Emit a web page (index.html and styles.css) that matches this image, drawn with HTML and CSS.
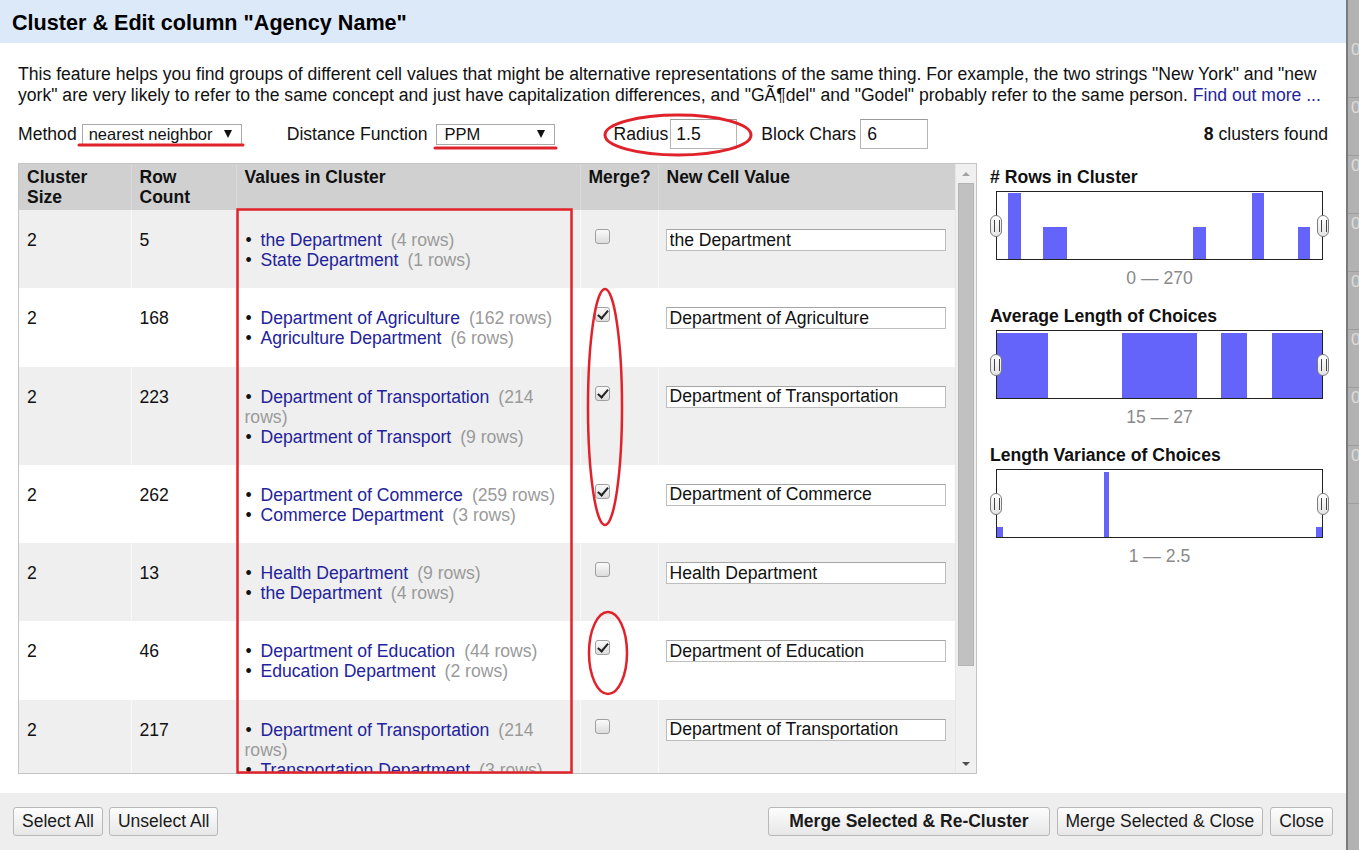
FILE: index.html
```html
<!DOCTYPE html>
<html lang="en">
<head>
<meta charset="utf-8">
<title>Cluster &amp; Edit column</title>
<link rel="stylesheet" href="styles.css">
</head>
<body>
<div class="page">
  <div class="dialog">
    <div class="dlg-header">
      <h1 class="dlg-title">Cluster &amp; Edit column "Agency Name"</h1>
    </div>
    <div class="dlg-body">
      <p class="intro">This feature helps you find groups of different cell values that might be alternative representations of the same thing. For example, the two strings "New York" and "new york" are very likely to refer to the same concept and just have capitalization differences, and "GÃ¶del" and "Godel" probably refer to the same person. <a class="link" href="#">Find out more ...</a></p>

      <div class="controls">
        <span class="ctl-label">Method</span>
        <span class="select select-method"><span>nearest neighbor</span><span class="caret"></span></span>
        <span class="ctl-label ctl-gap-distance">Distance Function</span>
        <span class="select select-distance"><span>PPM</span><span class="caret"></span></span>
        <span class="ctl-label ctl-gap-radius">Radius</span>
        <input class="num-input num-radius" type="text" value="1.5">
        <span class="ctl-label ctl-gap-block">Block Chars</span>
        <input class="num-input num-block" type="text" value="6">
        <span class="found"><b>8</b> clusters found</span>
      </div>

      <div class="main">
        <div class="grid-wrap">
          <div class="table-area">
            <table class="clusters">
              <colgroup>
                <col class="c-size"><col class="c-count"><col class="c-values"><col class="c-merge"><col class="c-new">
              </colgroup>
              <thead>
                <tr>
                  <th>Cluster Size</th>
                  <th>Row Count</th>
                  <th>Values in Cluster</th>
                  <th>Merge?</th>
                  <th>New Cell Value</th>
                </tr>
              </thead>
              <tbody>
                <tr class="odd">
                  <td>2</td><td>5</td>
                  <td><ul class="values">
                    <li><a class="link" href="#">the Department</a><span class="cnt">(4 rows)</span></li>
                    <li><a class="link" href="#">State Department</a><span class="cnt">(1 rows)</span></li>
                  </ul></td>
                  <td><input class="cb" type="checkbox"></td>
                  <td><input class="cell-input" type="text" value="the Department"></td>
                </tr>
                <tr>
                  <td>2</td><td>168</td>
                  <td><ul class="values">
                    <li><a class="link" href="#">Department of Agriculture</a><span class="cnt">(162 rows)</span></li>
                    <li><a class="link" href="#">Agriculture Department</a><span class="cnt">(6 rows)</span></li>
                  </ul></td>
                  <td><input class="cb" type="checkbox" checked></td>
                  <td><input class="cell-input" type="text" value="Department of Agriculture"></td>
                </tr>
                <tr class="odd">
                  <td>2</td><td>223</td>
                  <td><ul class="values">
                    <li><a class="link" href="#">Department of Transportation</a><span class="cnt">(214 rows)</span></li>
                    <li><a class="link" href="#">Department of Transport</a><span class="cnt">(9 rows)</span></li>
                  </ul></td>
                  <td><input class="cb" type="checkbox" checked></td>
                  <td><input class="cell-input" type="text" value="Department of Transportation"></td>
                </tr>
                <tr>
                  <td>2</td><td>262</td>
                  <td><ul class="values">
                    <li><a class="link" href="#">Department of Commerce</a><span class="cnt">(259 rows)</span></li>
                    <li><a class="link" href="#">Commerce Department</a><span class="cnt">(3 rows)</span></li>
                  </ul></td>
                  <td><input class="cb" type="checkbox" checked></td>
                  <td><input class="cell-input" type="text" value="Department of Commerce"></td>
                </tr>
                <tr class="odd">
                  <td>2</td><td>13</td>
                  <td><ul class="values">
                    <li><a class="link" href="#">Health Department</a><span class="cnt">(9 rows)</span></li>
                    <li><a class="link" href="#">the Department</a><span class="cnt">(4 rows)</span></li>
                  </ul></td>
                  <td><input class="cb" type="checkbox"></td>
                  <td><input class="cell-input" type="text" value="Health Department"></td>
                </tr>
                <tr>
                  <td>2</td><td>46</td>
                  <td><ul class="values">
                    <li><a class="link" href="#">Department of Education</a><span class="cnt">(44 rows)</span></li>
                    <li><a class="link" href="#">Education Department</a><span class="cnt">(2 rows)</span></li>
                  </ul></td>
                  <td><input class="cb" type="checkbox" checked></td>
                  <td><input class="cell-input" type="text" value="Department of Education"></td>
                </tr>
                <tr class="odd">
                  <td>2</td><td>217</td>
                  <td><ul class="values">
                    <li><a class="link" href="#">Department of Transportation</a><span class="cnt">(214 rows)</span></li>
                    <li><a class="link" href="#">Transportation Department</a><span class="cnt">(3 rows)</span></li>
                  </ul></td>
                  <td><input class="cb" type="checkbox"></td>
                  <td><input class="cell-input" type="text" value="Department of Transportation"></td>
                </tr>
              </tbody>
            </table>
          </div>
          <div class="vscroll">
            <div class="sb-arrow sb-up"></div>
            <div class="sb-track"><div class="sb-thumb"></div></div>
            <div class="sb-arrow sb-down"></div>
          </div>
        </div>

        <aside class="facets">
          <section class="facet">
            <h3 class="facet-title"># Rows in Cluster</h3>
            <div class="hist">
              <svg class="hist-svg" width="325" height="67" viewBox="0 0 325 67">
                <rect x="11" y="1" width="13" height="66"/>
                <rect x="46" y="35" width="24" height="32"/>
                <rect x="196" y="35" width="13" height="32"/>
                <rect x="255" y="1" width="12" height="66"/>
                <rect x="301" y="35" width="12" height="32"/>
              </svg>
              <span class="handle handle-l"></span>
              <span class="handle handle-r"></span>
            </div>
            <div class="range">0 — 270</div>
          </section>
          <section class="facet">
            <h3 class="facet-title">Average Length of Choices</h3>
            <div class="hist">
              <svg class="hist-svg" width="325" height="67" viewBox="0 0 325 67">
                <rect x="0" y="2" width="51" height="65"/>
                <rect x="125" y="2" width="75" height="65"/>
                <rect x="224" y="2" width="26" height="65"/>
                <rect x="275" y="2" width="50" height="65"/>
              </svg>
              <span class="handle handle-l"></span>
              <span class="handle handle-r"></span>
            </div>
            <div class="range">15 — 27</div>
          </section>
          <section class="facet">
            <h3 class="facet-title">Length Variance of Choices</h3>
            <div class="hist">
              <svg class="hist-svg" width="325" height="67" viewBox="0 0 325 67">
                <rect x="0" y="57" width="6" height="10"/>
                <rect x="107" y="2" width="5" height="65"/>
                <rect x="319" y="57" width="6" height="10"/>
              </svg>
              <span class="handle handle-l"></span>
              <span class="handle handle-r"></span>
            </div>
            <div class="range">1 — 2.5</div>
          </section>
        </aside>
      </div>
    </div>

    <div class="dlg-footer">
      <div class="btn-group">
        <button class="btn">Select All</button>
        <button class="btn">Unselect All</button>
      </div>
      <div class="btn-group">
        <button class="btn btn-primary">Merge Selected &amp; Re-Cluster</button>
        <button class="btn">Merge Selected &amp; Close</button>
        <button class="btn">Close</button>
      </div>
    </div>
  </div>

  <div class="bg-strip">
    <div class="bg-row">0</div>
    <div class="bg-row">0</div>
    <div class="bg-row">0</div>
    <div class="bg-row">0</div>
    <div class="bg-row">0</div>
    <div class="bg-row">0</div>
    <div class="bg-row">0</div>
    <div class="bg-row">0</div>
  </div>

  <svg class="annotations" width="1359" height="850" viewBox="0 0 1359 850">
    <g fill="none" stroke="#e0222b" stroke-width="3" stroke-linecap="round">
      <path d="M79 145 L243 145"/>
      <path d="M435 148 L556 148"/>
      <ellipse cx="678" cy="135" rx="73" ry="20"/>
      <rect x="237.5" y="209.5" width="334" height="563" stroke-width="2.5"/>
      <ellipse cx="605" cy="407" rx="17" ry="118" stroke-width="2.5"/>
      <ellipse cx="608" cy="653" rx="19" ry="41" stroke-width="2.5"/>
    </g>
  </svg>
</div>
</body>
</html>
```

FILE: styles.css
```css
* { box-sizing: border-box; }

html, body {
  margin: 0;
  padding: 0;
}

body {
  width: 1359px;
  height: 850px;
  overflow: hidden;
  font-family: "Liberation Sans", Arial, sans-serif;
  font-size: 17.6px;
  color: #111;
  background: #b4b4b4;
}

.page {
  position: relative;
  display: flex;
  width: 1359px;
  height: 850px;
}

/* ---------- dialog ---------- */
.dialog {
  width: 1348px;
  height: 850px;
  display: flex;
  flex-direction: column;
  background: #fff;
  border-right: 2px solid #7a7a7a;
}

.dlg-header {
  height: 43px;
  flex: none;
  background: #dce9f9;
  padding: 2px 0 0 12px;
}

.dlg-title {
  margin: 0;
  font-size: 21.6px;
  line-height: 41px;
  font-weight: bold;
  color: #000;
}

.dlg-body {
  flex: 1;
  padding: 0 18px;
}

.intro {
  margin: 21px 0 0;
  line-height: 21px;
  color: #111;
}

.link {
  color: #23239b;
  text-decoration: none;
}

/* ---------- controls ---------- */
.controls {
  display: flex;
  align-items: center;
  height: 30px;
  margin-top: 13px;
}

.ctl-label {
  margin-right: 5px;
}

.ctl-gap-distance { margin-left: 45px; margin-right: 8px; }
.ctl-gap-radius   { margin-left: 59px; margin-right: 2px; }
.ctl-gap-block    { margin-left: 24px; margin-right: 4px; }

.select {
  display: flex;
  align-items: center;
  justify-content: space-between;
  height: 21px;
  padding: 0 9px 0 6px;
  border: 1px solid #a9a9a9;
  background: #fff;
  font-size: 16.5px;
  line-height: 19px;
}

.select-method { width: 160px; }
.select-distance { width: 119px; padding-left: 8px; }

.caret {
  width: 0;
  height: 0;
  border-left: 4.5px solid transparent;
  border-right: 4.5px solid transparent;
  border-top: 8px solid #111;
}

.num-input {
  height: 30px;
  padding: 0 5px;
  border: 1px solid #b5b5b5;
  border-top-color: #9a9a9a;
  font-family: inherit;
  font-size: 17.6px;
  color: #111;
  background: #fff;
}

.num-radius { width: 67px; }
.num-block { width: 68px; padding-left: 6px; }

.found {
  margin-left: auto;
}

/* ---------- main area ---------- */
.main {
  display: flex;
  align-items: flex-start;
  margin-top: 14px;
}

.grid-wrap {
  display: flex;
  width: 959px;
  height: 611px;
  border: 1px solid #c4c4c4;
  flex: none;
}

.table-area {
  width: 936px;
  height: 609px;
  overflow: hidden;
}

.clusters {
  width: 936px;
  table-layout: fixed;
  border-collapse: collapse;
}

.c-size { width: 112px; }
.c-count { width: 105px; }
.c-values { width: 344px; }
.c-merge { width: 78px; }
.c-new { width: 297px; }

.clusters th {
  background: #d0d0d0;
  text-align: left;
  vertical-align: top;
  font-size: 17.5px;
  line-height: 20px;
  font-weight: bold;
  padding: 3px 8px 3px;
  height: 46px;
  color: #111;
  border-left: 1px solid #dadada;
}

.clusters th:first-child,
.clusters td:first-child { border-left: 0; }

.clusters td {
  vertical-align: top;
  line-height: 20px;
  padding: 20px 8px 18.3px;
  border-left: 1px solid rgba(255, 255, 255, 0.6);
}

.clusters tr.odd td { background: #efefef; }

.values {
  margin: 0;
  padding: 0;
  list-style: none;
}

.values li::before {
  content: "•";
  display: inline-block;
  box-sizing: border-box;
  width: 16px;
  padding-left: 1px;
  color: #111;
}

.cnt {
  margin-left: 9px;
  color: #9a9a9a;
}

.cb {
  appearance: none;
  -webkit-appearance: none;
  position: relative;
  width: 15px;
  height: 15px;
  margin: -1px 0 0 6px;
  border: 1px solid #a0a0a0;
  border-radius: 3px;
  background: linear-gradient(#fbfbfb, #dcdcdc);
  vertical-align: top;
}

.cb:checked::after {
  content: "";
  position: absolute;
  left: 4px;
  top: 0px;
  width: 4px;
  height: 9px;
  border-right: 2px solid #222;
  border-bottom: 2px solid #222;
  transform: rotate(40deg);
}

.cell-input {
  width: 280px;
  height: 22px;
  margin: -1px 0 0 -1px;
  padding: 0 3px;
  border: 1px solid #bdbdbd;
  border-top-color: #a5a5a5;
  font-family: inherit;
  font-size: 17.6px;
  color: #111;
  background: #fff;
  vertical-align: top;
}

/* ---------- scrollbar ---------- */
.vscroll {
  width: 21px;
  height: 609px;
  display: flex;
  flex-direction: column;
  background: #f0f0f0;
  border-left: 1px solid #e6e6e6;
}

.sb-arrow {
  height: 19px;
  flex: none;
  display: flex;
  align-items: center;
  justify-content: center;
}

.sb-up::before {
  content: "";
  border-left: 4px solid transparent;
  border-right: 4px solid transparent;
  border-bottom: 4px solid #a3a3a3;
}

.sb-down::before {
  content: "";
  border-left: 4px solid transparent;
  border-right: 4px solid transparent;
  border-top: 4px solid #505050;
}

.sb-track {
  flex: 1;
  padding: 0 2px;
}

.sb-thumb {
  height: 483px;
  background: #c1c1c1;
  border: 1px solid #b4b4b4;
}

/* ---------- facets ---------- */
.facets {
  margin-left: 13px;
  padding-top: 4px;
  width: 340px;
}

.facet + .facet { margin-top: 18px; }

.facet-title {
  margin: 0;
  font-size: 17.6px;
  line-height: 20px;
  font-weight: bold;
  color: #111;
}

.hist {
  position: relative;
  width: 327px;
  height: 69px;
  margin: 4px 0 0 6px;
  border: 1px solid #222;
  background: #fff;
}

.hist-svg {
  display: block;
  fill: #6464fa;
}

.handle {
  position: absolute;
  top: 23px;
  width: 12px;
  height: 22px;
  border: 1px solid #7c7c7c;
  border-radius: 6px;
  background: linear-gradient(#ffffff, #e4e4e4);
}

.handle::before {
  content: "";
  position: absolute;
  left: 3px;
  top: 4px;
  width: 4px;
  height: 12px;
  border-left: 1.5px solid #444;
  border-right: 1.5px solid #444;
}

.handle-l { left: -7px; }
.handle-r { right: -7px; }

.range {
  width: 327px;
  margin: 8px 0 0 6px;
  text-align: center;
  line-height: 20px;
  color: #8a8a8a;
}

/* ---------- footer ---------- */
.dlg-footer {
  height: 57px;
  flex: none;
  display: flex;
  justify-content: space-between;
  align-items: flex-start;
  padding: 14px 13px 0;
  background: #eeeeee;
}

.btn-group {
  display: flex;
  gap: 6px;
}

.btn-group + .btn-group { gap: 7px; }

.btn {
  height: 29px;
  padding: 0 8px;
  border: 1px solid #b8b8b8;
  border-radius: 3px;
  background: linear-gradient(#fdfdfd, #e7e7e7);
  font-family: inherit;
  font-size: 17.5px;
  color: #1a1a1a;
}

.btn-primary {
  font-weight: bold;
  padding: 0 20px;
}

/* ---------- page behind the dialog ---------- */
.bg-strip {
  flex: 1;
  background: #b2b2b2;
  overflow: hidden;
  padding-top: 40px;
}

.bg-row {
  height: 58px;
  padding-left: 3px;
  color: #dcdcdc;
  font-size: 17px;
  border-bottom: 1px solid #9d9d9d;
}

/* ---------- annotation overlay ---------- */
.annotations {
  position: absolute;
  left: 0;
  top: 0;
  pointer-events: none;
}
```
